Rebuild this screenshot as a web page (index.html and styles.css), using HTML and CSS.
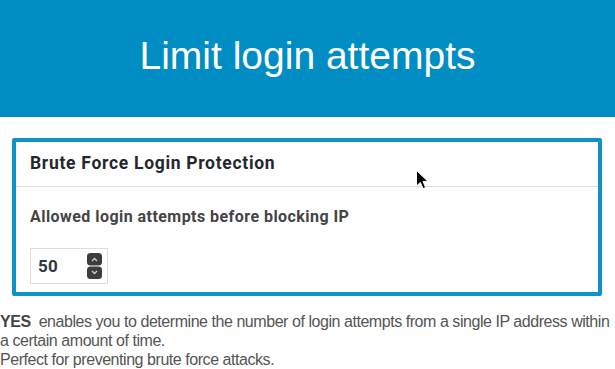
FILE: index.html
```html
<!DOCTYPE html>
<html lang="en">
<head>
    <meta charset="UTF-8">
    <title>Limit login attempts</title>
    <link rel="stylesheet" href="styles.css">
</head>
<body>

<header class="banner">
    <h1>Limit login attempts</h1>
</header>

<main>
    <div class="panel">
        <div class="panel-head">Brute Force Login Protection</div>
        <div class="panel-body">
            <label class="field-label" for="attempts">Allowed login attempts before blocking IP</label>
            <div class="number-box">
                <span class="number-value" id="attempts">50</span>
                <svg class="spinner" width="15" height="26" viewBox="0 0 15 26">
                    <rect x="0" y="0" width="15" height="12.5" rx="3.5" fill="#3d3d3d"/>
                    <rect x="0" y="13.5" width="15" height="12.5" rx="3.5" fill="#3d3d3d"/>
                    <path d="M5 8 L7.5 5.5 L10 8" fill="none" stroke="#cfcfcf" stroke-width="1.3"/>
                    <path d="M5 18 L7.5 20.5 L10 18" fill="none" stroke="#cfcfcf" stroke-width="1.3"/>
                </svg>
            </div>
        </div>
        <!-- mouse pointer caught in the screenshot -->
        <svg class="pointer" width="13" height="20" viewBox="0 0 13 20">
            <path d="M0.5 0.5 L0.5 16 L4.3 12.4 L7 18.6 L9.6 17.5 L7 11.4 L12 11.4 Z" fill="#000" stroke="#fff" stroke-width="1"/>
        </svg>
    </div>

    <p class="note">
        <strong>YES</strong>&nbsp; enables you to determine the number of login attempts from a single IP address within<br>
        a certain amount of time.<br>
        Perfect for preventing brute force attacks.
    </p>
</main>

</body>
</html>
```

FILE: styles.css
```css
body {
    margin: 0;
    padding: 0;
    background: #ffffff;
    font-family: Roboto, "Liberation Sans", sans-serif;
    color: #333;
}
.banner {
    background: #008dc3;
    padding: 33px 0 39px;
    text-align: center;
}
.banner h1 {
    margin: 0;
    font-family: "Liberation Sans", Arial, sans-serif;
    font-size: 39px;
    font-weight: normal;
    line-height: 45px;
    color: #ffffff;
}
.panel {
    position: relative;
    margin: 21px 13px 0 12px;
    border: 4px solid #0f93c7;
    border-radius: 2px;
    background: #ffffff;
}
.panel-head {
    padding: 9px 14px 11px;
    border-bottom: 1px solid #dddddd;
    font-size: 17.5px;
    font-weight: bold;
    letter-spacing: 0.7px;
    line-height: 24px;
    color: #23282d;
}
.panel-body {
    padding: 20px 14px 8px;
}
.field-label {
    display: block;
    font-size: 16px;
    font-weight: bold;
    letter-spacing: 0.45px;
    line-height: 20px;
    color: #444444;
}
.number-box {
    display: flex;
    align-items: center;
    justify-content: space-between;
    box-sizing: border-box;
    width: 78px;
    height: 36px;
    margin-top: 21px;
    padding: 0 5px 0 7px;
    border: 1px solid #dddddd;
}
.number-value {
    font-size: 17px;
    font-weight: bold;
    letter-spacing: 0.3px;
    line-height: 20px;
    color: #32373c;
}
.spinner {
    display: block;
}
.pointer {
    position: absolute;
    left: 400px;
    top: 28px;
}
.note {
    margin: 16px 0 0;
    font-family: "Liberation Sans", Arial, sans-serif;
    font-size: 16px;
    letter-spacing: -0.45px;
    line-height: 19px;
    color: #555555;
    white-space: nowrap;
}
.note strong {
    color: #444444;
}
```
